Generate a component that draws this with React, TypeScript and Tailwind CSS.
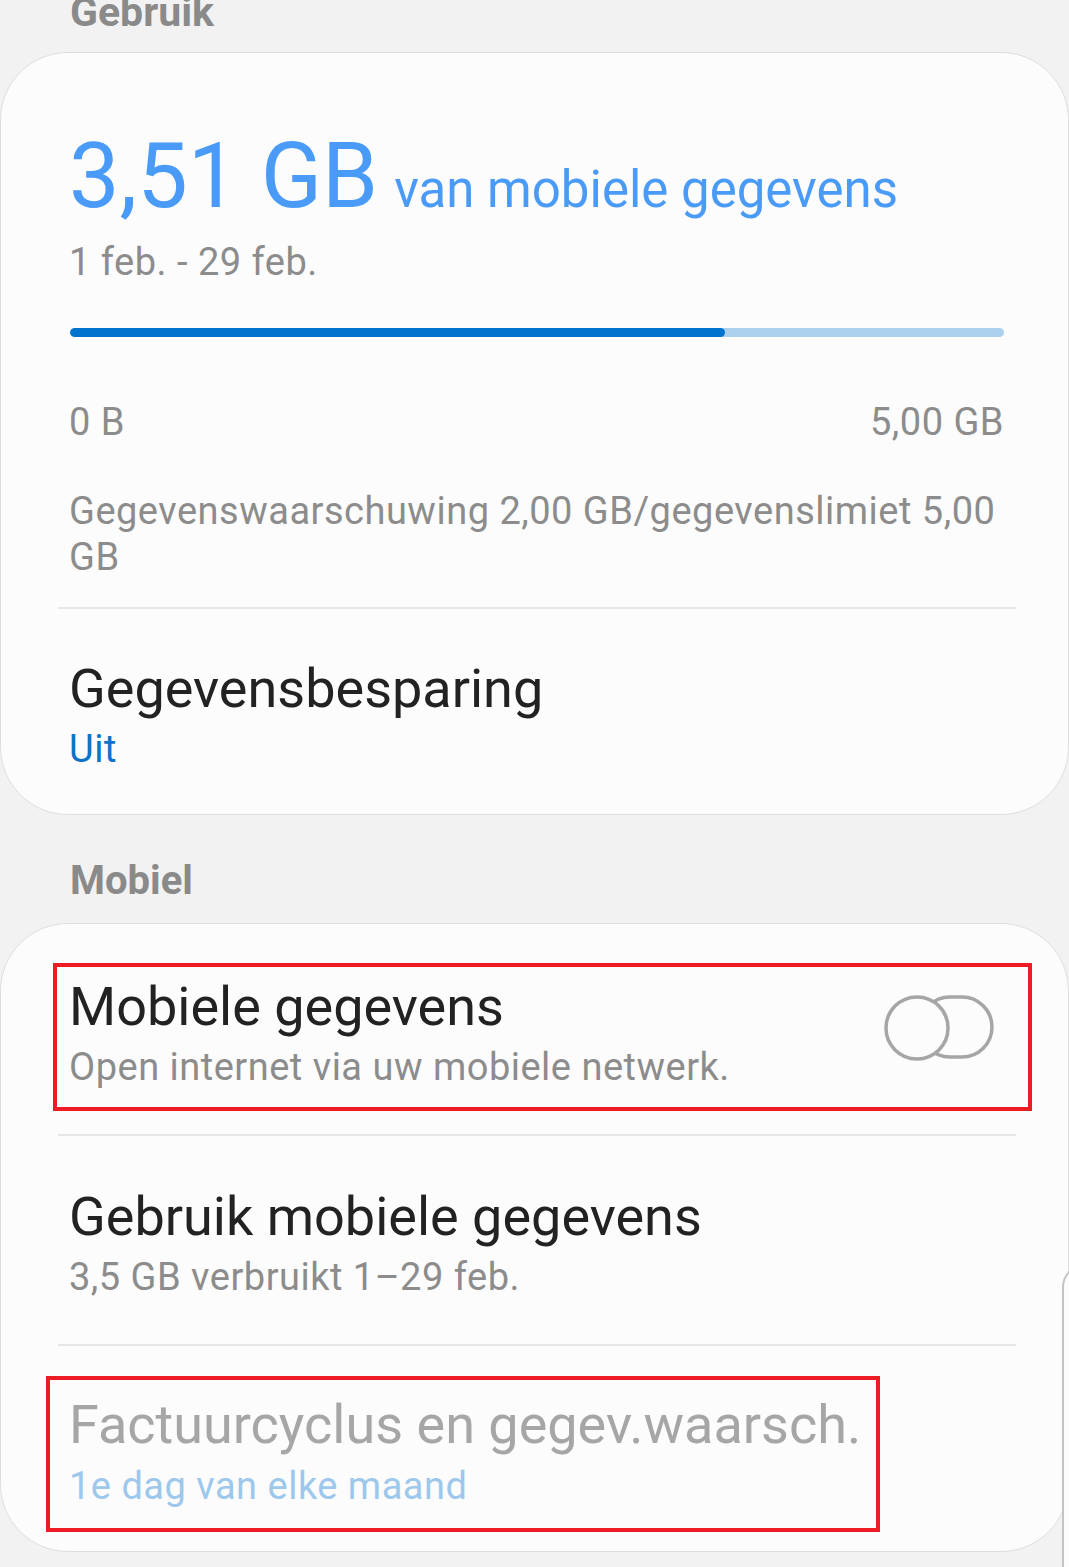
const Toggle = () => (
  <svg width="114" height="70" viewBox="0 0 114 70" fill="none" className="block">
    <rect x="38" y="4" width="72" height="60" rx="30" stroke="#a6a6a6" strokeWidth="3.5" />
    <circle cx="35" cy="35" r="31" fill="#fcfcfc" stroke="#a6a6a6" strokeWidth="3.5" />
  </svg>
);

const Divider = () => <div className="h-[2px] bg-[#e6e6e6] ml-[57px] mr-[52px]" />;

const sub = "text-[38px] leading-[38px] tracking-[0.5px]";

export default function App() {
  return (
    <div
      className="relative w-[1069px] h-[1567px] overflow-hidden bg-[#f2f2f2]"
      style={{ fontFamily: "Roboto, 'Noto Sans', sans-serif" }}
    >
      <div className="flex h-[52px] items-start pl-[70px]">
        <div className="mt-[-8px] text-[41px] leading-[41px] font-bold text-[#8a8a8a]">Gebruik</div>
      </div>

      <section className="rounded-[68px] border border-[#dedede] bg-[#fcfcfc] pl-[68px] pr-[64px] pt-[79px] pb-[46px]">
        <div className="flex h-[90px] items-baseline gap-[16px] text-[#4a9bf7] leading-none">
          <span className="text-[90px] leading-[90px]">3,51 GB</span>
          <span className="text-[51px] leading-[51px]">van mobiele gegevens</span>
        </div>
        <div className={`mt-[21px] ${sub} text-[#8c8c8c]`}>1 feb. - 29 feb.</div>
        <div className="mt-[47px] ml-[1px] flex h-[9px] overflow-hidden rounded-full bg-[#acd1ee]">
          <div className="h-full w-[655px] rounded-full bg-[#0073cf]" />
        </div>
        <div className={`mt-[66px] flex justify-between ${sub} text-[#8c8c8c]`}>
          <span>0 B</span>
          <span>5,00 GB</span>
        </div>
        <div className="mt-[47px] text-[38px] leading-[46px] tracking-[0.5px] text-[#8c8c8c]">
          Gegevenswaarschuwing 2,00 GB/gegevenslimiet 5,00 GB
        </div>
        <div className="mt-[27px] ml-[-11px] mr-[-12px] h-[2px] bg-[#e6e6e6]" />
        <div className="mt-[53px] text-[54px] leading-[54px] text-[#222222]">Gegevensbesparing</div>
        <div className={`mt-[14px] ${sub} text-[#0d72c8]`}>Uit</div>
      </section>

      <div className="mt-[46px] pl-[70px] text-[40px] leading-[40px] font-bold text-[#8a8a8a]">Mobiel</div>

      <section className="mt-[22px] rounded-[68px] border border-[#dedede] bg-[#fcfcfc] pt-[39px] pb-[19px]">
        <div className="ml-[52px] mr-[36px] flex items-start justify-between border-4 border-[#ed1c24] pl-[12px] pr-[32px] pt-[13px] pb-[21px]">
          <div>
            <div className="text-[54px] leading-[54px] text-[#222222]">Mobiele gegevens</div>
            <div className={`mt-[14px] ${sub} text-[#8c8c8c]`}>Open internet via uw mobiele netwerk.</div>
          </div>
          <div className="mt-[13px]">
            <Toggle />
          </div>
        </div>

        <div className="mt-[23px]">
          <Divider />
        </div>

        <div className="pl-[68px] pt-[54px] pb-[48px]">
          <div className="text-[54px] leading-[54px] text-[#222222]">Gebruik mobiele gegevens</div>
          <div className={`mt-[14px] ${sub} text-[#8c8c8c]`}>3,5 GB verbruikt 1–29 feb.</div>
        </div>

        <Divider />

        <div className="mt-[30px] ml-[45px] w-fit border-4 border-[#ed1c24] pl-[19px] pr-[15px] pt-[18px] pb-[23px]">
          <div className="text-[54px] leading-[54px] text-[#a6a6a6]">Factuurcyclus en gegev.waarsch.</div>
          <div className={`mt-[15px] ${sub} text-[#9dc8ec]`}>1e dag van elke maand</div>
        </div>
      </section>

      <div className="absolute left-[1062px] top-[1265px] h-[400px] w-[40px] rounded-tl-[22px] border-l-2 border-t-2 border-[#c4c4c4] bg-[#fcfcfc]" />
    </div>
  );
}
